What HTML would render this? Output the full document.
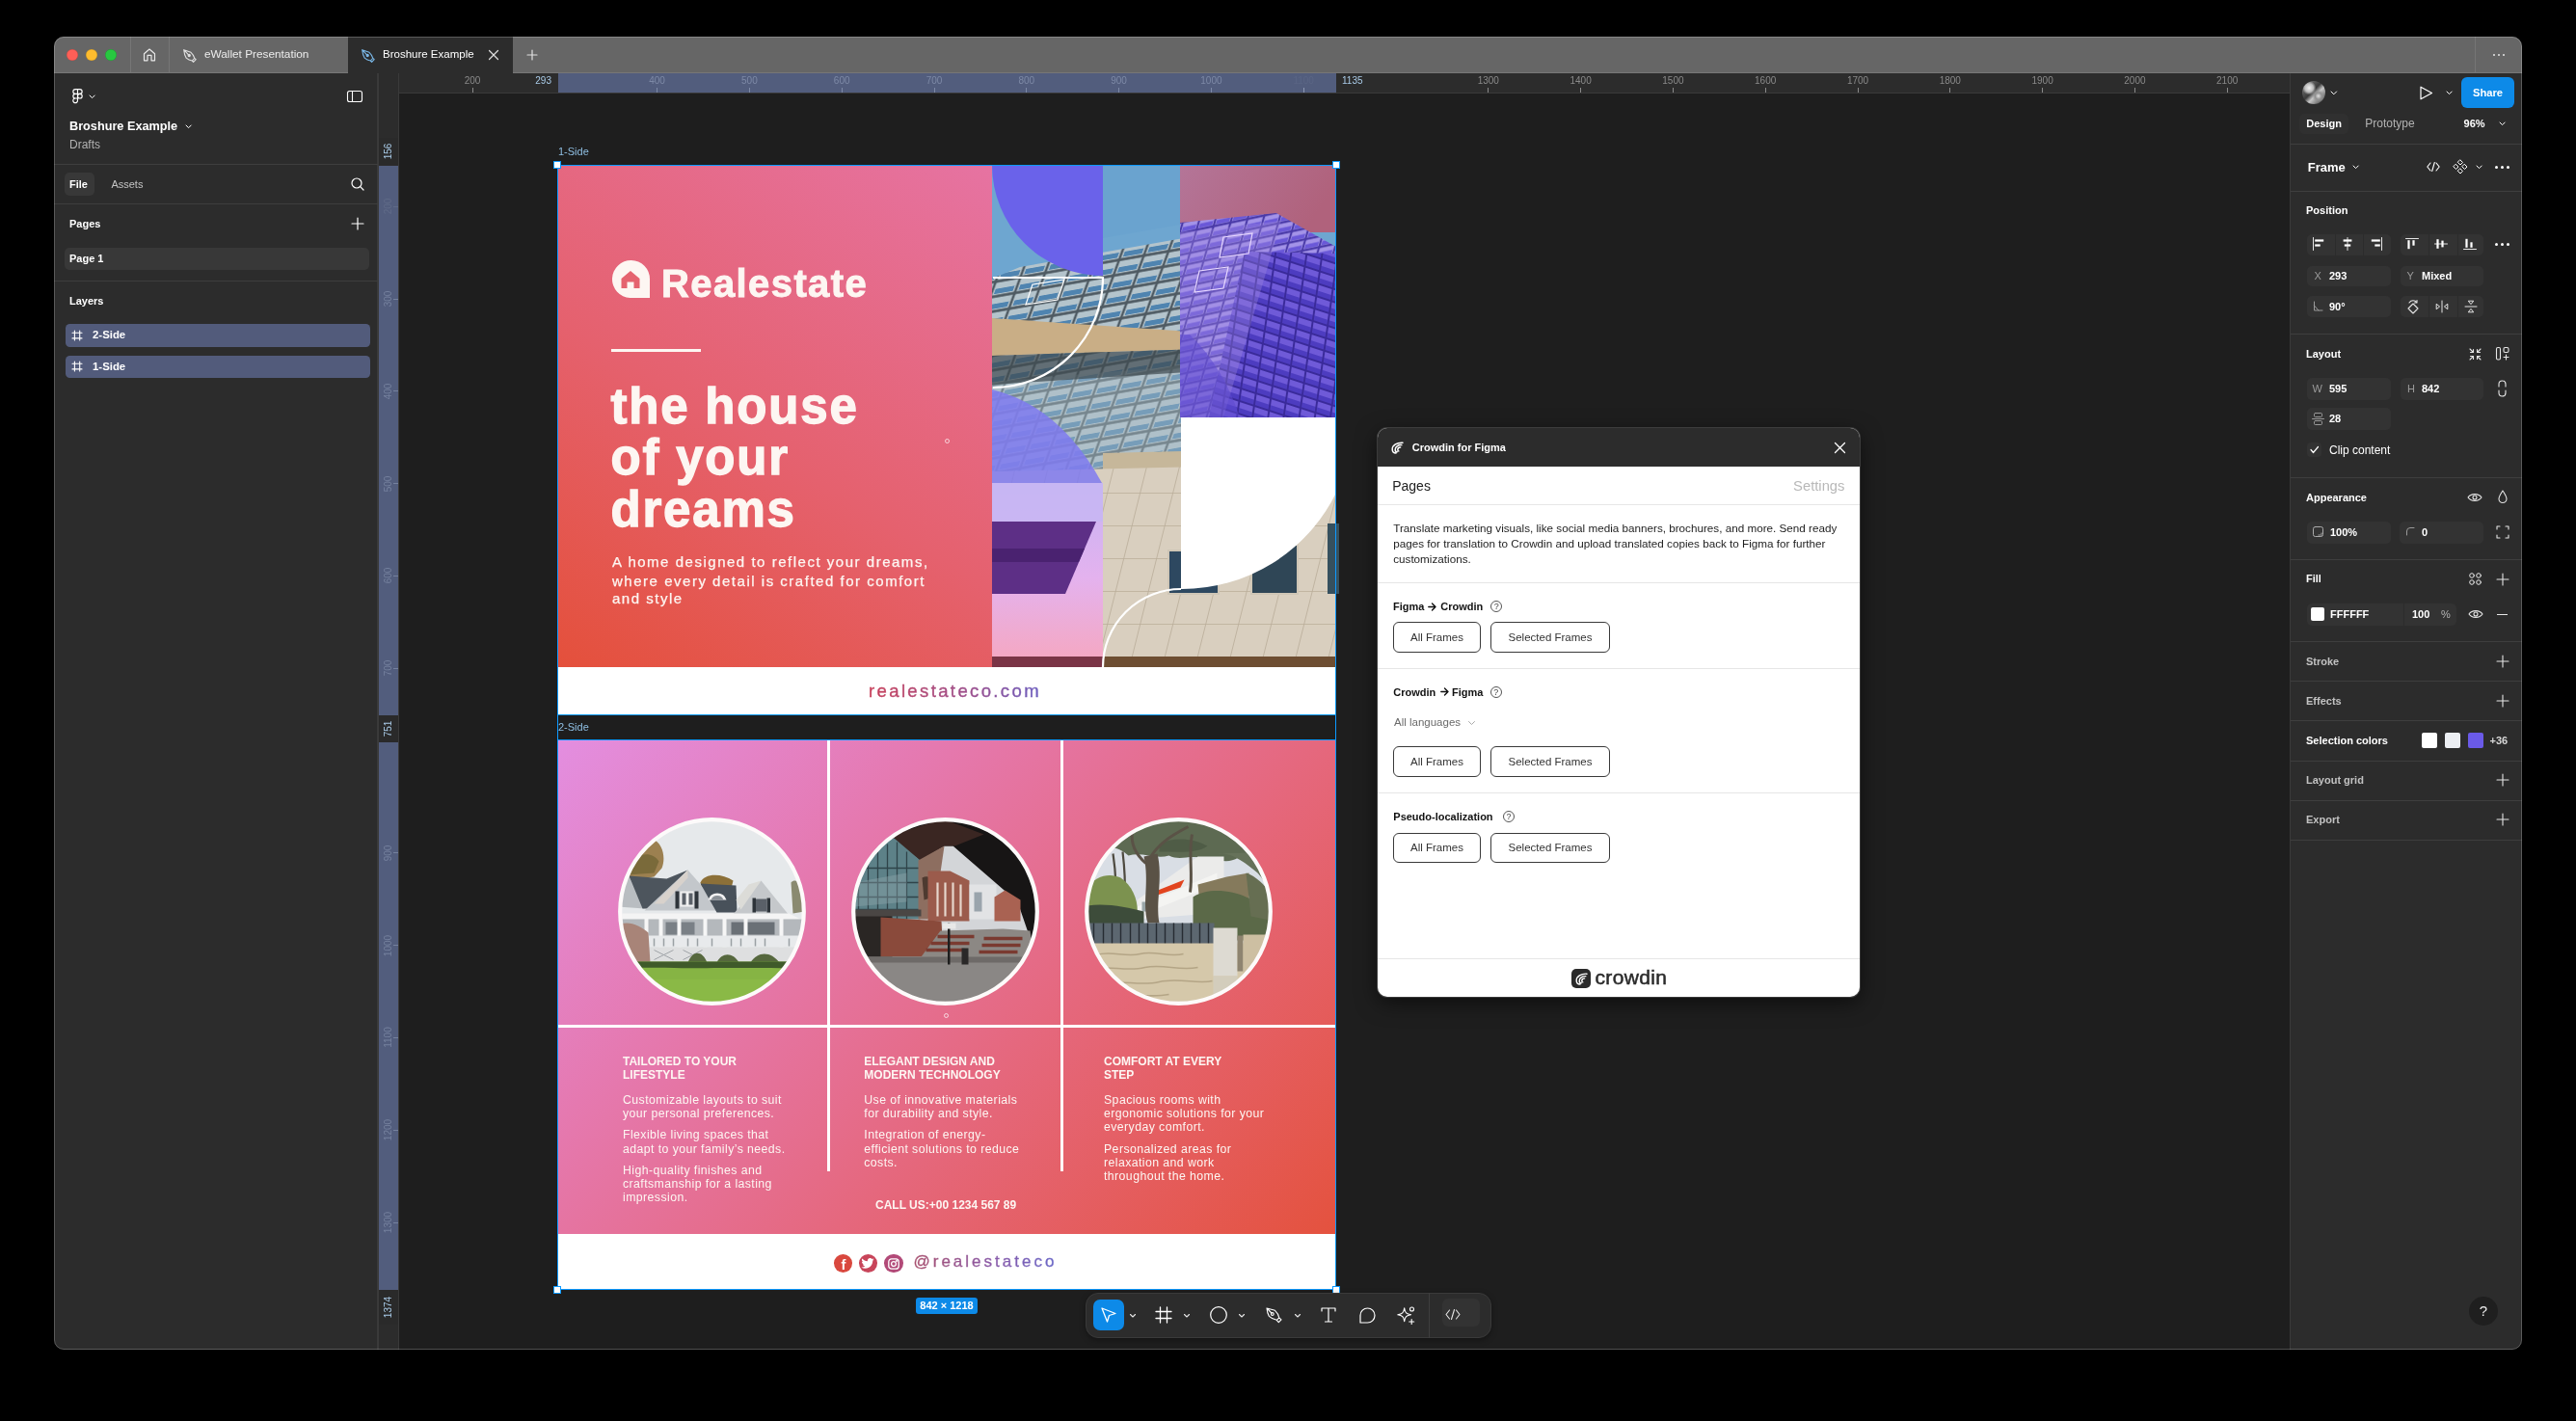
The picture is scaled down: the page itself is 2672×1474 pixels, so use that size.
<!DOCTYPE html>
<html><head><meta charset="utf-8">
<style>
*{box-sizing:border-box;margin:0;padding:0}
html,body{width:2672px;height:1474px;overflow:hidden;background:#000}
body{font-family:"Liberation Sans",sans-serif;position:relative}
.a{position:absolute}
#win{position:absolute;left:0;top:0;width:2672px;height:1474px;clip-path:inset(38px 56px 74px 56px round 10px);background:#1e1e1e;will-change:transform}
.t{position:absolute;white-space:nowrap;line-height:1}
svg{position:absolute;overflow:visible}
</style></head><body>
<div id="win">
<div class="a" style="left:56px;top:38px;width:2560px;height:38px;background:#666666;"></div>
<div class="a" style="left:56px;top:75px;width:2560px;height:1px;background:#777777;"></div>
<div class="a" style="left:361px;top:38px;width:171px;height:38px;background:#2c2c2c;"></div>
<div class="a" style="left:134.5px;top:38px;width:1px;height:37px;background:#767676;"></div>
<div class="a" style="left:175px;top:38px;width:1px;height:37px;background:#767676;"></div>
<div class="a" style="left:2567px;top:38px;width:1px;height:37px;background:#767676;"></div>
<div class="a" style="left:68.7px;top:50.7px;width:12.6px;height:12.6px;background:#fe5f57;border-radius:7px;box-shadow:inset 0 0 0 0.5px rgba(0,0,0,.2)"></div>
<div class="a" style="left:88.7px;top:50.7px;width:12.6px;height:12.6px;background:#febc2e;border-radius:7px;box-shadow:inset 0 0 0 0.5px rgba(0,0,0,.2)"></div>
<div class="a" style="left:108.7px;top:50.7px;width:12.6px;height:12.6px;background:#28c840;border-radius:7px;box-shadow:inset 0 0 0 0.5px rgba(0,0,0,.2)"></div>
<svg style="left:148px;top:49.5px;" width="14" height="14" viewBox="0 0 14 14" fill="none" stroke="#e8e8e8" stroke-width="1.2" stroke-linecap="round" stroke-linejoin="round"><path d="M1.5 12.8 V5.8 L7 1 L12.5 5.8 V12.8 H9 V7.3 H5 V12.8 Z"/></svg>
<svg style="left:189.5px;top:50.5px;" width="14" height="14" viewBox="0 0 14 14" fill="none" stroke="#e0e0e0" stroke-width="1.1" stroke-linecap="round" stroke-linejoin="round"><path d="M0.7 0.7 L8 3.3 Q10.8 5.8 11.8 9.3 L9.3 12 Q5.8 11.5 3.2 9.2 Q1.2 6 0.7 0.7 Z M9.3 12 L10.6 13.3 L13.2 10.7 L11.8 9.3 M0.7 0.7 L5.3 5.6"/><circle cx="6.2" cy="6.5" r="1.1" fill="#e0e0e0"/></svg>
<svg style="left:374.5px;top:50.5px;" width="14" height="14" viewBox="0 0 14 14" fill="none" stroke="#7ab8e8" stroke-width="1.1" stroke-linecap="round" stroke-linejoin="round"><path d="M0.7 0.7 L8 3.3 Q10.8 5.8 11.8 9.3 L9.3 12 Q5.8 11.5 3.2 9.2 Q1.2 6 0.7 0.7 Z M9.3 12 L10.6 13.3 L13.2 10.7 L11.8 9.3 M0.7 0.7 L5.3 5.6"/><circle cx="6.2" cy="6.5" r="1.1" fill="#7ab8e8"/></svg>
<div class="t" style="left:212px;top:51.31px;font-size:11.8px;color:#ececec;">eWallet Presentation</div>
<div class="t" style="left:397px;top:51.46px;font-size:11.5px;color:#fff;">Broshure Example</div>
<svg style="left:507px;top:52px;" width="10" height="10" viewBox="0 0 10 10" fill="none" stroke="#e0e0e0" stroke-width="1.2" stroke-linecap="round" stroke-linejoin="round"><path d="M0.5 0.5 L9.5 9.5 M9.5 0.5 L0.5 9.5"/></svg>
<svg style="left:547px;top:52px;" width="10" height="10" viewBox="0 0 10 10" fill="none" stroke="#e0e0e0" stroke-width="1.2" stroke-linecap="round" stroke-linejoin="round"><path d="M5 0 V10 M0 5 H10"/></svg>
<div class="a" style="left:2585.8px;top:55.8px;width:2.4px;height:2.4px;background:#e8e8e8;border-radius:2px;"></div>
<div class="a" style="left:2590.8px;top:55.8px;width:2.4px;height:2.4px;background:#e8e8e8;border-radius:2px;"></div>
<div class="a" style="left:2595.8px;top:55.8px;width:2.4px;height:2.4px;background:#e8e8e8;border-radius:2px;"></div>
<div class="a" style="left:56px;top:76px;width:336px;height:1324px;background:#2c2c2c;"></div>
<div class="a" style="left:391px;top:76px;width:1px;height:1324px;background:#3a3a3a;"></div>
<svg style="left:75px;top:92px;" width="11" height="16" viewBox="0 0 11 16" fill="none" stroke="#fff" stroke-width="1.15" stroke-linecap="round" stroke-linejoin="round"><path d="M5.5 0.6 H3.2 A2.35 2.35 0 0 0 3.2 5.3 H5.5 Z M5.5 0.6 H7.8 A2.35 2.35 0 0 1 7.8 5.3 H5.5 Z M5.5 5.3 H3.2 A2.35 2.35 0 0 0 3.2 10 H5.5 Z M5.5 10 H3.2 A2.35 2.35 0 1 0 5.5 12.35 Z"/><circle cx="7.85" cy="7.65" r="2.35"/></svg>
<svg style="left:92.4px;top:97.7px;" width="7.2" height="4.6" viewBox="0 0 7.2 4.6" fill="none" stroke="#fff" stroke-width="1" stroke-linecap="round" stroke-linejoin="round"><path d="M1 1 L3.6 3.6 L6.2 1"/></svg>
<svg style="left:360px;top:94px;" width="16" height="12" viewBox="0 0 16 12" fill="none" stroke="#fff" stroke-width="1.1" stroke-linecap="round" stroke-linejoin="round"><rect x="0.5" y="0.5" width="15" height="11" rx="2"/><path d="M5.5 0.5 V11.5"/></svg>
<div class="t" style="left:72px;top:124.88px;font-size:12.7px;color:#fff;font-weight:bold;">Broshure Example</div>
<svg style="left:192.4px;top:128.7px;" width="7.2" height="4.6" viewBox="0 0 7.2 4.6" fill="none" stroke="#fff" stroke-width="1" stroke-linecap="round" stroke-linejoin="round"><path d="M1 1 L3.6 3.6 L6.2 1"/></svg>
<div class="t" style="left:72px;top:144.42px;font-size:12px;color:#b3b3b3;">Drafts</div>
<div class="a" style="left:56px;top:170px;width:336px;height:1px;background:#3e3e3e;"></div>
<div class="a" style="left:66.5px;top:178.6px;width:31.5px;height:24.4px;background:#383838;border-radius:5px;"></div>
<div class="t" style="left:72px;top:185.7px;font-size:11px;color:#fff;font-weight:bold;">File</div>
<div class="t" style="left:115.4px;top:185.7px;font-size:11px;color:#c4c4c4;">Assets</div>
<svg style="left:364px;top:184px;" width="14" height="14" viewBox="0 0 14 14" fill="none" stroke="#fff" stroke-width="1.2" stroke-linecap="round" stroke-linejoin="round"><circle cx="6" cy="6" r="5"/><path d="M9.7 9.7 L13 13"/></svg>
<div class="a" style="left:56px;top:211px;width:336px;height:1px;background:#3e3e3e;"></div>
<div class="t" style="left:72px;top:227px;font-size:11px;color:#fff;font-weight:bold;">Pages</div>
<svg style="left:365px;top:226px;" width="12" height="12" viewBox="0 0 12 12" fill="none" stroke="#fff" stroke-width="1.2" stroke-linecap="round" stroke-linejoin="round"><path d="M6 0 V12 M0 6 H12"/></svg>
<div class="a" style="left:66.5px;top:257px;width:316px;height:23px;background:#383838;border-radius:5px;"></div>
<div class="t" style="left:72px;top:263.2px;font-size:11px;color:#fff;font-weight:bold;">Page 1</div>
<div class="a" style="left:56px;top:291px;width:336px;height:1px;background:#3e3e3e;"></div>
<div class="t" style="left:72px;top:306.7px;font-size:11px;color:#fff;font-weight:bold;">Layers</div>
<div class="a" style="left:68px;top:336.1px;width:316px;height:23.5px;background:#525b7b;border-radius:4.5px;"></div>
<svg style="left:75px;top:343px;" width="10" height="10" viewBox="0 0 10 10" fill="none" stroke="#fff" stroke-width="1.1" stroke-linecap="round" stroke-linejoin="round"><path d="M2.4 0 V10 M7.7 0 V10 M0 2.3 H10 M0 7.9 H10"/></svg>
<div class="t" style="left:96px;top:342.41px;font-size:11.4px;color:#fff;font-weight:bold;">2-Side</div>
<div class="a" style="left:68px;top:368.5px;width:316px;height:23.5px;background:#525b7b;border-radius:4.5px;"></div>
<svg style="left:75px;top:375.4px;" width="10" height="10" viewBox="0 0 10 10" fill="none" stroke="#fff" stroke-width="1.1" stroke-linecap="round" stroke-linejoin="round"><path d="M2.4 0 V10 M7.7 0 V10 M0 2.3 H10 M0 7.9 H10"/></svg>
<div class="t" style="left:96px;top:374.81px;font-size:11.4px;color:#fff;font-weight:bold;">1-Side</div>
<div class="a" style="left:392px;top:76px;width:1984px;height:21px;background:#2c2c2c;"></div>
<div class="a" style="left:392px;top:96px;width:1984px;height:1px;background:#3a3a3a;"></div>
<div class="a" style="left:392px;top:76px;width:22px;height:1324px;background:#2c2c2c;"></div>
<div class="a" style="left:413px;top:76px;width:1px;height:1324px;background:#3a3a3a;"></div>
<div class="a" style="left:392px;top:76px;width:1px;height:1324px;background:#3a3a3a;"></div>
<div class="a" style="left:579px;top:76px;width:807px;height:20px;background:#525d7d;"></div>
<div class="t" style="left:490px;top:78.68px;font-size:10px;color:#8a8a8a;transform:translateX(-50%);">200</div>
<div class="a" style="left:489.5px;top:91px;width:1px;height:5px;background:#8a8a8a;"></div>
<div class="t" style="left:681.6px;top:78.68px;font-size:10px;color:#7d89a6;transform:translateX(-50%);">400</div>
<div class="a" style="left:681.1px;top:91px;width:1px;height:5px;background:#7d89a6;"></div>
<div class="t" style="left:777.4px;top:78.68px;font-size:10px;color:#7d89a6;transform:translateX(-50%);">500</div>
<div class="a" style="left:776.9px;top:91px;width:1px;height:5px;background:#7d89a6;"></div>
<div class="t" style="left:873.2px;top:78.68px;font-size:10px;color:#7d89a6;transform:translateX(-50%);">600</div>
<div class="a" style="left:872.7px;top:91px;width:1px;height:5px;background:#7d89a6;"></div>
<div class="t" style="left:969px;top:78.68px;font-size:10px;color:#7d89a6;transform:translateX(-50%);">700</div>
<div class="a" style="left:968.5px;top:91px;width:1px;height:5px;background:#7d89a6;"></div>
<div class="t" style="left:1064.8px;top:78.68px;font-size:10px;color:#7d89a6;transform:translateX(-50%);">800</div>
<div class="a" style="left:1064.3px;top:91px;width:1px;height:5px;background:#7d89a6;"></div>
<div class="t" style="left:1160.6px;top:78.68px;font-size:10px;color:#7d89a6;transform:translateX(-50%);">900</div>
<div class="a" style="left:1160.1px;top:91px;width:1px;height:5px;background:#7d89a6;"></div>
<div class="t" style="left:1256.4px;top:78.68px;font-size:10px;color:#7d89a6;transform:translateX(-50%);">1000</div>
<div class="a" style="left:1255.9px;top:91px;width:1px;height:5px;background:#7d89a6;"></div>
<div class="t" style="left:1543.8px;top:78.68px;font-size:10px;color:#8a8a8a;transform:translateX(-50%);">1300</div>
<div class="a" style="left:1543.3px;top:91px;width:1px;height:5px;background:#8a8a8a;"></div>
<div class="t" style="left:1639.6px;top:78.68px;font-size:10px;color:#8a8a8a;transform:translateX(-50%);">1400</div>
<div class="a" style="left:1639.1px;top:91px;width:1px;height:5px;background:#8a8a8a;"></div>
<div class="t" style="left:1735.4px;top:78.68px;font-size:10px;color:#8a8a8a;transform:translateX(-50%);">1500</div>
<div class="a" style="left:1734.9px;top:91px;width:1px;height:5px;background:#8a8a8a;"></div>
<div class="t" style="left:1831.2px;top:78.68px;font-size:10px;color:#8a8a8a;transform:translateX(-50%);">1600</div>
<div class="a" style="left:1830.7px;top:91px;width:1px;height:5px;background:#8a8a8a;"></div>
<div class="t" style="left:1927px;top:78.68px;font-size:10px;color:#8a8a8a;transform:translateX(-50%);">1700</div>
<div class="a" style="left:1926.5px;top:91px;width:1px;height:5px;background:#8a8a8a;"></div>
<div class="t" style="left:2022.8px;top:78.68px;font-size:10px;color:#8a8a8a;transform:translateX(-50%);">1800</div>
<div class="a" style="left:2022.3px;top:91px;width:1px;height:5px;background:#8a8a8a;"></div>
<div class="t" style="left:2118.6px;top:78.68px;font-size:10px;color:#8a8a8a;transform:translateX(-50%);">1900</div>
<div class="a" style="left:2118.1px;top:91px;width:1px;height:5px;background:#8a8a8a;"></div>
<div class="t" style="left:2214.4px;top:78.68px;font-size:10px;color:#8a8a8a;transform:translateX(-50%);">2000</div>
<div class="a" style="left:2213.9px;top:91px;width:1px;height:5px;background:#8a8a8a;"></div>
<div class="t" style="left:2310.2px;top:78.68px;font-size:10px;color:#8a8a8a;transform:translateX(-50%);">2100</div>
<div class="a" style="left:2309.7px;top:91px;width:1px;height:5px;background:#8a8a8a;"></div>
<div class="a" style="left:1351.7px;top:91px;width:1px;height:5px;background:#8d98b3;"></div>
<div class="t" style="left:1352.2px;top:78.68px;font-size:10px;color:#5a6584;transform:translateX(-50%);">1100</div>
<div class="t" style="right:2100px;top:78.68px;font-size:10px;color:#a9cbe8;">293</div>
<div class="t" style="left:1392px;top:78.68px;font-size:10px;color:#a9cbe8;">1135</div>
<div class="a" style="left:393px;top:172px;width:20px;height:570px;background:#525d7d;"></div>
<div class="a" style="left:393px;top:769px;width:20px;height:570px;background:#525d7d;"></div>
<div class="t" style="left:402.5px;top:214.2px;font-size:10px;color:#606b88;transform:translate(-50%,-50%) rotate(-90deg)">200</div>
<div class="a" style="left:408px;top:213.7px;width:5px;height:1px;background:#606b88;"></div>
<div class="t" style="left:402.5px;top:310px;font-size:10px;color:#75819e;transform:translate(-50%,-50%) rotate(-90deg)">300</div>
<div class="a" style="left:408px;top:309.5px;width:5px;height:1px;background:#75819e;"></div>
<div class="t" style="left:402.5px;top:405.8px;font-size:10px;color:#75819e;transform:translate(-50%,-50%) rotate(-90deg)">400</div>
<div class="a" style="left:408px;top:405.3px;width:5px;height:1px;background:#75819e;"></div>
<div class="t" style="left:402.5px;top:501.6px;font-size:10px;color:#75819e;transform:translate(-50%,-50%) rotate(-90deg)">500</div>
<div class="a" style="left:408px;top:501.1px;width:5px;height:1px;background:#75819e;"></div>
<div class="t" style="left:402.5px;top:597.4px;font-size:10px;color:#75819e;transform:translate(-50%,-50%) rotate(-90deg)">600</div>
<div class="a" style="left:408px;top:596.9px;width:5px;height:1px;background:#75819e;"></div>
<div class="t" style="left:402.5px;top:693.2px;font-size:10px;color:#75819e;transform:translate(-50%,-50%) rotate(-90deg)">700</div>
<div class="a" style="left:408px;top:692.7px;width:5px;height:1px;background:#75819e;"></div>
<div class="t" style="left:402.5px;top:884.8px;font-size:10px;color:#75819e;transform:translate(-50%,-50%) rotate(-90deg)">900</div>
<div class="a" style="left:408px;top:884.3px;width:5px;height:1px;background:#75819e;"></div>
<div class="t" style="left:402.5px;top:980.6px;font-size:10px;color:#75819e;transform:translate(-50%,-50%) rotate(-90deg)">1000</div>
<div class="a" style="left:408px;top:980.1px;width:5px;height:1px;background:#75819e;"></div>
<div class="t" style="left:402.5px;top:1076.4px;font-size:10px;color:#75819e;transform:translate(-50%,-50%) rotate(-90deg)">1100</div>
<div class="a" style="left:408px;top:1075.9px;width:5px;height:1px;background:#75819e;"></div>
<div class="t" style="left:402.5px;top:1172.2px;font-size:10px;color:#75819e;transform:translate(-50%,-50%) rotate(-90deg)">1200</div>
<div class="a" style="left:408px;top:1171.7px;width:5px;height:1px;background:#75819e;"></div>
<div class="t" style="left:402.5px;top:1268px;font-size:10px;color:#75819e;transform:translate(-50%,-50%) rotate(-90deg)">1300</div>
<div class="a" style="left:408px;top:1267.5px;width:5px;height:1px;background:#75819e;"></div>
<div class="a" style="left:393px;top:142.5px;width:20px;height:28px;background:#2a2a2a;"></div>
<div class="t" style="left:402.5px;top:156.5px;font-size:10px;color:#a9cbe8;transform:translate(-50%,-50%) rotate(-90deg)">156</div>
<div class="a" style="left:393px;top:741.5px;width:20px;height:28px;background:#2a2a2a;"></div>
<div class="t" style="left:402.5px;top:755.5px;font-size:10px;color:#a9cbe8;transform:translate(-50%,-50%) rotate(-90deg)">751</div>
<div class="a" style="left:393px;top:1338px;width:20px;height:36px;background:#2a2a2a;"></div>
<div class="t" style="left:402.5px;top:1356px;font-size:10px;color:#a9cbe8;transform:translate(-50%,-50%) rotate(-90deg)">1374</div>
<div class="a" style="left:2375px;top:76px;width:241px;height:1324px;background:#2c2c2c;"></div>
<div class="a" style="left:2375px;top:76px;width:1px;height:1324px;background:#3a3a3a;"></div>
<div class="a" style="left:2388px;top:84px;width:24px;height:24px;border-radius:50%;background:radial-gradient(circle at 30% 30%,#f0f0f0 0,#bdbdbd 18%,transparent 30%),radial-gradient(circle at 70% 65%,#e0e0e0 0,#909090 15%,transparent 28%),linear-gradient(135deg,#8a8a8a,#3a3a3a 45%,#c8c8c8 60%,#2a2a2a)"></div>
<svg style="left:2417.2px;top:93.6px;" width="7.6" height="4.8" viewBox="0 0 7.6 4.8" fill="none" stroke="#fff" stroke-width="1" stroke-linecap="round" stroke-linejoin="round"><path d="M1 1 L3.8 3.8 L6.6 1"/></svg>
<svg style="left:2510px;top:89px;" width="14" height="15" viewBox="0 0 14 15" fill="none" stroke="#fff" stroke-width="1.2" stroke-linecap="round" stroke-linejoin="round"><path d="M1 1.2 L12.5 7.5 L1 13.8 Z"/></svg>
<svg style="left:2537.4px;top:93.7px;" width="7.2" height="4.6" viewBox="0 0 7.2 4.6" fill="none" stroke="#fff" stroke-width="1" stroke-linecap="round" stroke-linejoin="round"><path d="M1 1 L3.6 3.6 L6.2 1"/></svg>
<div class="a" style="left:2553px;top:80.2px;width:55px;height:31.7px;background:#0d8ae8;border-radius:6px;"></div>
<div class="t" style="left:2580.5px;top:90.6px;font-size:11.2px;color:#fff;transform:translateX(-50%);font-weight:bold;">Share</div>
<div class="a" style="left:2385.3px;top:118px;width:50.7px;height:21.4px;background:#303030;border-radius:5px;"></div>
<div class="t" style="left:2392.3px;top:122.9px;font-size:11px;color:#fff;font-weight:bold;">Design</div>
<div class="t" style="left:2453.3px;top:122.42px;font-size:12px;color:#b3b3b3;">Prototype</div>
<div class="t" style="left:2555.6px;top:122.9px;font-size:11px;color:#fff;font-weight:bold;">96%</div>
<svg style="left:2592.4px;top:125.7px;" width="7.2" height="4.6" viewBox="0 0 7.2 4.6" fill="none" stroke="#fff" stroke-width="1" stroke-linecap="round" stroke-linejoin="round"><path d="M1 1 L3.6 3.6 L6.2 1"/></svg>
<div class="a" style="left:2376px;top:149px;width:240px;height:1px;background:#3e3e3e;"></div>
<div class="t" style="left:2393.7px;top:166.93px;font-size:13px;color:#fff;font-weight:bold;">Frame</div>
<svg style="left:2439.9px;top:171.1px;" width="7.2" height="4.6" viewBox="0 0 7.2 4.6" fill="none" stroke="#fff" stroke-width="1" stroke-linecap="round" stroke-linejoin="round"><path d="M1 1 L3.6 3.6 L6.2 1"/></svg>
<svg style="left:2517px;top:168px;" width="14" height="10" viewBox="0 0 14 10" fill="none" stroke="#fff" stroke-width="1.1" stroke-linecap="round" stroke-linejoin="round"><path d="M4 1 L0.8 5 L4 9 M10 1 L13.2 5 L10 9 M8.3 0.5 L5.7 9.5"/></svg>
<svg style="left:2545px;top:165px;" width="14" height="16" viewBox="0 0 14 16" fill="none" stroke="#fff" stroke-width="1" stroke-linecap="round" stroke-linejoin="round"><path d="M7 1 L9.5 3.5 L7 6 L4.5 3.5 Z M7 10 L9.5 12.5 L7 15 L4.5 12.5 Z M2.5 5.5 L5 8 L2.5 10.5 L0 8 Z M11.5 5.5 L14 8 L11.5 10.5 L9 8 Z"/></svg>
<svg style="left:2568.4px;top:171.1px;" width="7.2" height="4.6" viewBox="0 0 7.2 4.6" fill="none" stroke="#fff" stroke-width="1" stroke-linecap="round" stroke-linejoin="round"><path d="M1 1 L3.6 3.6 L6.2 1"/></svg>
<div class="a" style="left:2588px;top:172px;width:2.8px;height:2.8px;background:#fff;border-radius:2px;"></div>
<div class="a" style="left:2594px;top:172px;width:2.8px;height:2.8px;background:#fff;border-radius:2px;"></div>
<div class="a" style="left:2600px;top:172px;width:2.8px;height:2.8px;background:#fff;border-radius:2px;"></div>
<div class="a" style="left:2376px;top:197.5px;width:240px;height:1px;background:#3e3e3e;"></div>
<div class="t" style="left:2392px;top:212.7px;font-size:11px;color:#fff;font-weight:bold;">Position</div>
<div class="a" style="left:2392.8px;top:242.8px;width:87.2px;height:22.2px;background:#333333;border-radius:5px;"></div>
<div class="a" style="left:2490px;top:242.8px;width:85.8px;height:22.2px;background:#333333;border-radius:5px;"></div>
<div class="a" style="left:2421.5px;top:243px;width:1px;height:22px;background:#2c2c2c;"></div>
<div class="a" style="left:2451px;top:243px;width:1px;height:22px;background:#2c2c2c;"></div>
<div class="a" style="left:2519px;top:243px;width:1px;height:22px;background:#2c2c2c;"></div>
<div class="a" style="left:2548.5px;top:243px;width:1px;height:22px;background:#2c2c2c;"></div>
<svg style="left:2398px;top:246px;" width="14" height="14" viewBox="0 0 14 14" fill="none" stroke="#e6e6e6" stroke-width="1" stroke-linecap="round" stroke-linejoin="round"><path d="M1.5 0.5 V13.5"/><rect x="3.2" y="2.4" width="9" height="2.2" fill="#fff" stroke="none"/><rect x="3.2" y="7.4" width="5.5" height="2.2" fill="#fff" stroke="none"/></svg>
<svg style="left:2428px;top:246px;" width="14" height="14" viewBox="0 0 14 14" fill="none" stroke="#e6e6e6" stroke-width="1" stroke-linecap="round" stroke-linejoin="round"><path d="M7 0.5 V13.5"/><rect x="2.6" y="2.4" width="8.8" height="2.2" fill="#fff" stroke="none"/><rect x="3.8" y="7.4" width="6.4" height="2.2" fill="#fff" stroke="none"/></svg>
<svg style="left:2458px;top:246px;" width="14" height="14" viewBox="0 0 14 14" fill="none" stroke="#e6e6e6" stroke-width="1" stroke-linecap="round" stroke-linejoin="round"><path d="M12.5 0.5 V13.5"/><rect x="1.8" y="2.4" width="9" height="2.2" fill="#fff" stroke="none"/><rect x="5.3" y="7.4" width="5.5" height="2.2" fill="#fff" stroke="none"/></svg>
<svg style="left:2495px;top:246px;" width="14" height="14" viewBox="0 0 14 14" fill="none" stroke="#e6e6e6" stroke-width="1" stroke-linecap="round" stroke-linejoin="round"><path d="M0.5 1.5 H13.5"/><rect x="2.4" y="3.2" width="2.2" height="9" fill="#fff" stroke="none"/><rect x="7.4" y="3.2" width="2.2" height="5.5" fill="#fff" stroke="none"/></svg>
<svg style="left:2525px;top:246px;" width="14" height="14" viewBox="0 0 14 14" fill="none" stroke="#e6e6e6" stroke-width="1" stroke-linecap="round" stroke-linejoin="round"><path d="M0.5 7 H13.5"/><rect x="2.4" y="2.2" width="2.2" height="9.6" fill="#fff" stroke="none"/><rect x="7.4" y="3.6" width="2.2" height="6.8" fill="#fff" stroke="none"/></svg>
<svg style="left:2555px;top:246px;" width="14" height="14" viewBox="0 0 14 14" fill="none" stroke="#e6e6e6" stroke-width="1" stroke-linecap="round" stroke-linejoin="round"><path d="M0.5 12.5 H13.5"/><rect x="2.4" y="1.8" width="2.2" height="9" fill="#fff" stroke="none"/><rect x="7.4" y="5.3" width="2.2" height="5.5" fill="#fff" stroke="none"/></svg>
<div class="a" style="left:2588.1px;top:252.1px;width:2.8px;height:2.8px;background:#fff;border-radius:2px;"></div>
<div class="a" style="left:2594.1px;top:252.1px;width:2.8px;height:2.8px;background:#fff;border-radius:2px;"></div>
<div class="a" style="left:2600.1px;top:252.1px;width:2.8px;height:2.8px;background:#fff;border-radius:2px;"></div>
<div class="a" style="left:2392.8px;top:275.5px;width:87.2px;height:21.5px;background:#333333;border-radius:5px;"></div>
<div class="a" style="left:2490px;top:275.5px;width:85.8px;height:21.5px;background:#333333;border-radius:5px;"></div>
<div class="t" style="left:2400.5px;top:281px;font-size:11px;color:#9a9a9a;">X</div>
<div class="t" style="left:2416px;top:281px;font-size:11px;color:#fff;font-weight:bold;">293</div>
<div class="t" style="left:2496.5px;top:281px;font-size:11px;color:#9a9a9a;">Y</div>
<div class="t" style="left:2512px;top:281px;font-size:11px;color:#fff;font-weight:bold;">Mixed</div>
<div class="a" style="left:2392.8px;top:307px;width:87.2px;height:22px;background:#333333;border-radius:5px;"></div>
<div class="a" style="left:2490px;top:307px;width:85.8px;height:22px;background:#333333;border-radius:5px;"></div>
<div class="a" style="left:2519px;top:307px;width:1px;height:22px;background:#2c2c2c;"></div>
<div class="a" style="left:2548.5px;top:307px;width:1px;height:22px;background:#2c2c2c;"></div>
<svg style="left:2399px;top:312px;" width="11" height="11" viewBox="0 0 11 11" fill="none" stroke="#9a9a9a" stroke-width="1" stroke-linecap="round" stroke-linejoin="round"><path d="M1.5 1 V10 H10 M1.5 5 L6 10"/></svg>
<div class="t" style="left:2416px;top:312.7px;font-size:11px;color:#fff;font-weight:bold;">90°</div>
<svg style="left:2496px;top:310px;" width="14" height="16" viewBox="0 0 14 16" fill="none" stroke="#e6e6e6" stroke-width="1.1" stroke-linecap="round" stroke-linejoin="round"><path d="M7 5 L12 10 L7 15 L2 10 Z M3 4 C5 1 9 1 11 4 M11 1.5 V4 H8.5"/></svg>
<svg style="left:2526px;top:311px;" width="14" height="14" viewBox="0 0 14 14" fill="none" stroke="#e6e6e6" stroke-width="1" stroke-linecap="round" stroke-linejoin="round"><path d="M7 1 V13 M1.5 4.5 L4.6 7 L1.5 9.5 Z M12.5 4.5 L9.4 7 L12.5 9.5 Z"/></svg>
<svg style="left:2556px;top:311px;" width="14" height="14" viewBox="0 0 14 14" fill="none" stroke="#e6e6e6" stroke-width="1" stroke-linecap="round" stroke-linejoin="round"><path d="M1 7 H13 M4.5 1.5 L7 4.6 L9.5 1.5 Z M4.5 12.5 L7 9.4 L9.5 12.5 Z"/></svg>
<div class="a" style="left:2376px;top:346px;width:240px;height:1px;background:#3e3e3e;"></div>
<div class="t" style="left:2392px;top:362px;font-size:11px;color:#fff;font-weight:bold;">Layout</div>
<svg style="left:2561px;top:361px;" width="13" height="13" viewBox="0 0 13 13" fill="none" stroke="#e6e6e6" stroke-width="1.1" stroke-linecap="round" stroke-linejoin="round"><path d="M1 1 L4.5 4.5 M4.5 1.5 V4.5 H1.5 M12 1 L8.5 4.5 M8.5 1.5 V4.5 H11.5 M1 12 L4.5 8.5 M1.5 8.5 H4.5 V11.5 M12 12 L8.5 8.5 M11.5 8.5 H8.5 V11.5"/></svg>
<svg style="left:2589px;top:360px;" width="14" height="14" viewBox="0 0 14 14" fill="none" stroke="#e6e6e6" stroke-width="1.1" stroke-linecap="round" stroke-linejoin="round"><rect x="0.5" y="0.5" width="4" height="12.5" rx="1.5"/><rect x="8" y="0.5" width="5" height="5" rx="1.5"/><path d="M10.5 8 V13 M8 10.5 H13"/></svg>
<div class="a" style="left:2392.8px;top:391.6px;width:87.2px;height:23.2px;background:#333333;border-radius:5px;"></div>
<div class="a" style="left:2490px;top:391.6px;width:85.8px;height:23.2px;background:#333333;border-radius:5px;"></div>
<div class="t" style="left:2398.5px;top:397.9px;font-size:11px;color:#9a9a9a;">W</div>
<div class="t" style="left:2416px;top:397.9px;font-size:11px;color:#fff;font-weight:bold;">595</div>
<div class="t" style="left:2497px;top:397.9px;font-size:11px;color:#9a9a9a;">H</div>
<div class="t" style="left:2512px;top:397.9px;font-size:11px;color:#fff;font-weight:bold;">842</div>
<svg style="left:2591px;top:395px;" width="9" height="16" viewBox="0 0 9 16" fill="none" stroke="#e6e6e6" stroke-width="1.1" stroke-linecap="round" stroke-linejoin="round"><path d="M1 6 V3.5 A3.5 3.5 0 0 1 8 3.5 V6 M1 10 V12.5 A3.5 3.5 0 0 0 8 12.5 V10"/></svg>
<div class="a" style="left:2392.8px;top:423px;width:87.2px;height:23px;background:#333333;border-radius:5px;"></div>
<svg style="left:2398px;top:428px;" width="13" height="13" viewBox="0 0 13 13" fill="none" stroke="#9a9a9a" stroke-width="1" stroke-linecap="round" stroke-linejoin="round"><rect x="2.5" y="0.5" width="8" height="4" rx="1"/><rect x="2.5" y="8.5" width="8" height="4" rx="1"/><path d="M0.5 6.5 H12.5"/></svg>
<div class="t" style="left:2416px;top:429.2px;font-size:11px;color:#fff;font-weight:bold;">28</div>
<div class="a" style="left:2393px;top:459px;width:15px;height:15px;background:#333;border-radius:4px;"></div>
<svg style="left:2396px;top:461.5px;" width="9" height="9" viewBox="0 0 9 9" fill="none" stroke="#fff" stroke-width="1.2" stroke-linecap="round" stroke-linejoin="round"><path d="M1 4.5 L3.5 7.5 L8.5 1.5"/></svg>
<div class="t" style="left:2416px;top:461.22px;font-size:12px;color:#fff;">Clip content</div>
<div class="a" style="left:2376px;top:495.2px;width:240px;height:1px;background:#3e3e3e;"></div>
<div class="t" style="left:2392px;top:510.7px;font-size:11px;color:#fff;font-weight:bold;">Appearance</div>
<svg style="left:2559px;top:511px;" width="16" height="10" viewBox="0 0 16 10" fill="none" stroke="#e6e6e6" stroke-width="1.1" stroke-linecap="round" stroke-linejoin="round"><path d="M1 5 C4 0.5 12 0.5 15 5 C12 9.5 4 9.5 1 5 Z"/><circle cx="8" cy="5" r="2"/></svg>
<svg style="left:2591px;top:508px;" width="10" height="15" viewBox="0 0 10 15" fill="none" stroke="#e6e6e6" stroke-width="1.1" stroke-linecap="round" stroke-linejoin="round"><path d="M5 1 C3 4 1 7 1 9.5 A4 4 0 0 0 9 9.5 C9 7 7 4 5 1 Z"/></svg>
<div class="a" style="left:2392.7px;top:540.8px;width:87.3px;height:22.8px;background:#333333;border-radius:5px;"></div>
<div class="a" style="left:2489px;top:540.8px;width:87px;height:22.8px;background:#333333;border-radius:5px;"></div>
<svg style="left:2399px;top:546px;" width="11" height="11" viewBox="0 0 11 11" fill="none" stroke="#aaa" stroke-width="1" stroke-linecap="round" stroke-linejoin="round"><rect x="0.5" y="0.5" width="10" height="10" rx="2"/><path d="M6 9 H9 V6" stroke-dasharray="1 1"/></svg>
<div class="t" style="left:2417px;top:546.9px;font-size:11px;color:#fff;font-weight:bold;">100%</div>
<svg style="left:2496px;top:547px;" width="8" height="8" viewBox="0 0 8 8" fill="none" stroke="#9a9a9a" stroke-width="1" stroke-linecap="round" stroke-linejoin="round"><path d="M0.5 8 V4 A3.5 3.5 0 0 1 4 0.5 H8"/></svg>
<div class="t" style="left:2512px;top:546.9px;font-size:11px;color:#fff;font-weight:bold;">0</div>
<svg style="left:2589px;top:545px;" width="14" height="14" viewBox="0 0 14 14" fill="none" stroke="#e6e6e6" stroke-width="1.1" stroke-linecap="round" stroke-linejoin="round"><path d="M1 4 V1 H4 M10 1 H13 V4 M13 10 V13 H10 M4 13 H1 V10"/></svg>
<div class="a" style="left:2376px;top:580.4px;width:240px;height:1px;background:#3e3e3e;"></div>
<div class="t" style="left:2392px;top:595.2px;font-size:11px;color:#fff;font-weight:bold;">Fill</div>
<svg style="left:2561px;top:594px;" width="13" height="13" viewBox="0 0 13 13" fill="none" stroke="#e6e6e6" stroke-width="1" stroke-linecap="round" stroke-linejoin="round"><circle cx="3" cy="3" r="2.3"/><circle cx="10" cy="3" r="2.3"/><circle cx="3" cy="10" r="2.3"/><circle cx="10" cy="10" r="2.3"/></svg>
<svg style="left:2589.5px;top:594.5px;" width="12" height="12" viewBox="0 0 12 12" fill="none" stroke="#e6e6e6" stroke-width="1.1" stroke-linecap="round" stroke-linejoin="round"><path d="M6 0 V12 M0 6 H12"/></svg>
<div class="a" style="left:2392.7px;top:626px;width:155.3px;height:22.6px;background:#333333;border-radius:5px;"></div>
<div class="a" style="left:2492.5px;top:626px;width:1px;height:22.6px;background:#2c2c2c;"></div>
<div class="a" style="left:2397px;top:630px;width:14.2px;height:14.2px;background:#fff;border-radius:2px;"></div>
<div class="t" style="left:2417px;top:632px;font-size:11px;color:#fff;font-weight:bold;">FFFFFF</div>
<div class="t" style="left:2502px;top:632px;font-size:11px;color:#fff;font-weight:bold;">100</div>
<div class="t" style="left:2532px;top:632px;font-size:11px;color:#b3b3b3;">%</div>
<svg style="left:2560px;top:632px;" width="16" height="10" viewBox="0 0 16 10" fill="none" stroke="#e6e6e6" stroke-width="1.1" stroke-linecap="round" stroke-linejoin="round"><path d="M1 5 C4 0.5 12 0.5 15 5 C12 9.5 4 9.5 1 5 Z"/><circle cx="8" cy="5" r="2"/></svg>
<div class="a" style="left:2590px;top:637px;width:11px;height:1.2px;background:#e6e6e6;"></div>
<div class="a" style="left:2376px;top:665.2px;width:240px;height:1px;background:#3e3e3e;"></div>
<div class="a" style="left:2376px;top:706px;width:240px;height:1px;background:#3e3e3e;"></div>
<div class="a" style="left:2376px;top:747px;width:240px;height:1px;background:#3e3e3e;"></div>
<div class="a" style="left:2376px;top:788.5px;width:240px;height:1px;background:#3e3e3e;"></div>
<div class="a" style="left:2376px;top:829.8px;width:240px;height:1px;background:#3e3e3e;"></div>
<div class="a" style="left:2376px;top:870.5px;width:240px;height:1px;background:#3e3e3e;"></div>
<div class="t" style="left:2392px;top:680.7px;font-size:11px;color:#c2c2c2;font-weight:bold;">Stroke</div>
<svg style="left:2589.5px;top:680px;" width="12" height="12" viewBox="0 0 12 12" fill="none" stroke="#e6e6e6" stroke-width="1.1" stroke-linecap="round" stroke-linejoin="round"><path d="M6 0 V12 M0 6 H12"/></svg>
<div class="t" style="left:2392px;top:721.7px;font-size:11px;color:#c2c2c2;font-weight:bold;">Effects</div>
<svg style="left:2589.5px;top:721px;" width="12" height="12" viewBox="0 0 12 12" fill="none" stroke="#e6e6e6" stroke-width="1.1" stroke-linecap="round" stroke-linejoin="round"><path d="M6 0 V12 M0 6 H12"/></svg>
<div class="t" style="left:2392px;top:803.7px;font-size:11px;color:#c2c2c2;font-weight:bold;">Layout grid</div>
<svg style="left:2589.5px;top:803px;" width="12" height="12" viewBox="0 0 12 12" fill="none" stroke="#e6e6e6" stroke-width="1.1" stroke-linecap="round" stroke-linejoin="round"><path d="M6 0 V12 M0 6 H12"/></svg>
<div class="t" style="left:2392px;top:844.7px;font-size:11px;color:#c2c2c2;font-weight:bold;">Export</div>
<svg style="left:2589.5px;top:844px;" width="12" height="12" viewBox="0 0 12 12" fill="none" stroke="#e6e6e6" stroke-width="1.1" stroke-linecap="round" stroke-linejoin="round"><path d="M6 0 V12 M0 6 H12"/></svg>
<div class="t" style="left:2392px;top:762.7px;font-size:11px;color:#fff;font-weight:bold;">Selection colors</div>
<div class="a" style="left:2511.8px;top:760px;width:16.4px;height:16.4px;background:#fff;border-radius:2px;"></div>
<div class="a" style="left:2535.8px;top:760px;width:16.4px;height:16.4px;background:#eceff3;border-radius:2px;"></div>
<div class="a" style="left:2559.8px;top:760px;width:16.4px;height:16.4px;background:#6a5ae8;border-radius:2px;"></div>
<div class="t" style="left:2582.5px;top:762.7px;font-size:11px;color:#d6d6d6;font-weight:bold;">+36</div>
<div class="a" style="left:2561px;top:1344.5px;width:30px;height:30px;background:#1f1f1f;border-radius:15px;"></div>
<div class="t" style="left:2576px;top:1352.27px;font-size:15px;color:#e8e8e8;transform:translateX(-50%);">?</div>
<div class="a" style="left:578px;top:171px;width:451px;height:521px;background:linear-gradient(32deg,#e4503b 0%,#e5616e 45%,#e673a2 100%)"></div>
<div class="a" style="left:578px;top:691.6px;width:808px;height:49.6px;background:#fff;"></div>
<svg style="left:634px;top:269.5px" width="40" height="39" viewBox="0 0 40 39">
<path d="M40 39 H19.5 A19.5 19.5 0 1 1 40 19.5 Z" fill="#fdf6f2"/>
<path d="M10.5 29 V19 L20 11 L29.5 19 V29 H23.5 V22.5 H16.5 V29 Z" fill="#e5636f"/>
</svg>
<div class="t" style="left:686px;top:273.94px;font-size:40px;color:#fdf6f2;font-weight:bold;letter-spacing:1.4px;-webkit-text-stroke:0.9px #fdf6f2">Realestate</div>
<div class="a" style="left:634px;top:362px;width:93px;height:3.2px;background:#fdf6f2;"></div>
<div class="t" style="left:633.5px;top:396.23px;font-size:51px;color:#fdf6f2;font-weight:bold;letter-spacing:1.8px;-webkit-text-stroke:1.3px #fdf6f2">the house</div>
<div class="t" style="left:633.5px;top:449.13px;font-size:51px;color:#fdf6f2;font-weight:bold;letter-spacing:1.8px;-webkit-text-stroke:1.3px #fdf6f2">of your</div>
<div class="t" style="left:633.5px;top:503.23px;font-size:51px;color:#fdf6f2;font-weight:bold;letter-spacing:1.8px;-webkit-text-stroke:1.3px #fdf6f2">dreams</div>
<div class="t" style="left:635px;top:575.3px;font-size:15px;color:#fdf6f2;letter-spacing:1.52px;-webkit-text-stroke:0.25px #fdf6f2">A home designed to reflect your dreams,</div>
<div class="t" style="left:635px;top:595.2px;font-size:15px;color:#fdf6f2;letter-spacing:1.52px;-webkit-text-stroke:0.25px #fdf6f2">where every detail is crafted for comfort</div>
<div class="t" style="left:635px;top:613.3px;font-size:15px;color:#fdf6f2;letter-spacing:1.52px;-webkit-text-stroke:0.25px #fdf6f2">and style</div>
<div class="t" style="left:901px;top:708.24px;font-size:18.5px;color:transparent;letter-spacing:2.38px;background:linear-gradient(90deg,#c8405a,#9a4f8e 60%,#6c5fc0);-webkit-background-clip:text;background-clip:text;-webkit-text-stroke:0.4px transparent">realestateco.com</div>
<div class="a" style="left:979.5px;top:454.5px;width:5px;height:5px;border-radius:50%;border:1px solid #fff;opacity:.7"></div>
<div class="a" style="left:578px;top:767.5px;width:808px;height:512.5px;background:linear-gradient(135deg,#e38ee0 0%,#e579b0 30%,#e5687e 60%,#e4523e 100%)"></div>
<div class="a" style="left:578px;top:1280px;width:808px;height:58.2px;background:#fff;"></div>
<div class="a" style="left:858px;top:767.5px;width:3px;height:447.5px;background:#fff;"></div>
<div class="a" style="left:1100px;top:767.5px;width:3px;height:447.5px;background:#fff;"></div>
<div class="a" style="left:578px;top:1063px;width:808px;height:3px;background:#fff;"></div>
<div class="t" style="left:646px;top:1094.84px;font-size:12px;color:#fdf6f2;font-weight:bold;">TAILORED TO YOUR</div>
<div class="t" style="left:646px;top:1109.34px;font-size:12px;color:#fdf6f2;font-weight:bold;">LIFESTYLE</div>
<div class="t" style="left:896.3px;top:1094.84px;font-size:12px;color:#fdf6f2;font-weight:bold;">ELEGANT DESIGN AND</div>
<div class="t" style="left:896.3px;top:1109.34px;font-size:12px;color:#fdf6f2;font-weight:bold;">MODERN TECHNOLOGY</div>
<div class="t" style="left:1145px;top:1094.84px;font-size:12px;color:#fdf6f2;font-weight:bold;">COMFORT AT EVERY</div>
<div class="t" style="left:1145px;top:1109.34px;font-size:12px;color:#fdf6f2;font-weight:bold;">STEP</div>
<div class="t" style="left:646px;top:1135.09px;font-size:12.3px;color:#fdf6f2;letter-spacing:0.42px">Customizable layouts to suit</div>
<div class="t" style="left:646px;top:1149.19px;font-size:12.3px;color:#fdf6f2;letter-spacing:0.42px">your personal preferences.</div>
<div class="t" style="left:646px;top:1171.39px;font-size:12.3px;color:#fdf6f2;letter-spacing:0.42px">Flexible living spaces that</div>
<div class="t" style="left:646px;top:1185.59px;font-size:12.3px;color:#fdf6f2;letter-spacing:0.42px">adapt to your family’s needs.</div>
<div class="t" style="left:646px;top:1207.89px;font-size:12.3px;color:#fdf6f2;letter-spacing:0.42px">High-quality finishes and</div>
<div class="t" style="left:646px;top:1222.09px;font-size:12.3px;color:#fdf6f2;letter-spacing:0.42px">craftsmanship for a lasting</div>
<div class="t" style="left:646px;top:1236.39px;font-size:12.3px;color:#fdf6f2;letter-spacing:0.42px">impression.</div>
<div class="t" style="left:896.3px;top:1135.09px;font-size:12.3px;color:#fdf6f2;letter-spacing:0.42px">Use of innovative materials</div>
<div class="t" style="left:896.3px;top:1149.19px;font-size:12.3px;color:#fdf6f2;letter-spacing:0.42px">for durability and style.</div>
<div class="t" style="left:896.3px;top:1171.39px;font-size:12.3px;color:#fdf6f2;letter-spacing:0.42px">Integration of energy-</div>
<div class="t" style="left:896.3px;top:1185.59px;font-size:12.3px;color:#fdf6f2;letter-spacing:0.42px">efficient solutions to reduce</div>
<div class="t" style="left:896.3px;top:1199.89px;font-size:12.3px;color:#fdf6f2;letter-spacing:0.42px">costs.</div>
<div class="t" style="left:1145px;top:1135.09px;font-size:12.3px;color:#fdf6f2;letter-spacing:0.42px">Spacious rooms with</div>
<div class="t" style="left:1145px;top:1149.19px;font-size:12.3px;color:#fdf6f2;letter-spacing:0.42px">ergonomic solutions for your</div>
<div class="t" style="left:1145px;top:1163.39px;font-size:12.3px;color:#fdf6f2;letter-spacing:0.42px">everyday comfort.</div>
<div class="t" style="left:1145px;top:1185.59px;font-size:12.3px;color:#fdf6f2;letter-spacing:0.42px">Personalized areas for</div>
<div class="t" style="left:1145px;top:1199.89px;font-size:12.3px;color:#fdf6f2;letter-spacing:0.42px">relaxation and work</div>
<div class="t" style="left:1145px;top:1214.09px;font-size:12.3px;color:#fdf6f2;letter-spacing:0.42px">throughout the home.</div>
<div class="t" style="left:908px;top:1243.84px;font-size:12px;color:#fdf6f2;font-weight:bold;letter-spacing:0px">CALL US:+00 1234 567 89</div>
<div class="a" style="left:864.6px;top:1300.8px;width:19.6px;height:19.6px;background:#d9483e;border-radius:10px;"></div>
<div class="a" style="left:890.6px;top:1300.8px;width:19.6px;height:19.6px;background:#c8455a;border-radius:10px;"></div>
<div class="a" style="left:917px;top:1300.8px;width:19.6px;height:19.6px;background:#b24a78;border-radius:10px;"></div>
<div class="t" style="left:875px;top:1304.51px;font-size:14.5px;color:#fff;transform:translateX(-50%);font-weight:bold;">f</div>
<svg style="left:893.4px;top:1305px" width="14" height="11" viewBox="0 0 24 20"><path fill="#fff" d="M24 2.4c-.9.4-1.8.6-2.8.8 1-.6 1.8-1.6 2.2-2.7-1 .6-2 1-3.1 1.2C19.3.7 18 0 16.6 0c-2.7 0-4.9 2.2-4.9 4.9 0 .4 0 .8.1 1.1C7.7 5.8 4.1 3.9 1.7.9c-.4.7-.7 1.6-.7 2.5 0 1.7.9 3.2 2.2 4.1-.8 0-1.6-.2-2.2-.6v.1c0 2.4 1.7 4.4 3.9 4.8-.4.1-.8.2-1.3.2-.3 0-.6 0-.9-.1.6 2 2.4 3.4 4.6 3.4-1.7 1.3-3.8 2.1-6.1 2.1-.4 0-.8 0-1.2-.1 2.2 1.4 4.8 2.2 7.5 2.2 9.1 0 14-7.5 14-14v-.6c1-.7 1.8-1.6 2.5-2.5z"/></svg>
<svg style="left:920.8px;top:1304.6px" width="12" height="12" viewBox="0 0 12 12" fill="none" stroke="#fff" stroke-width="1.3"><rect x="0.8" y="0.8" width="10.4" height="10.4" rx="3"/><circle cx="6" cy="6" r="2.4"/><circle cx="9" cy="3" r="0.4" fill="#fff"/></svg>
<div class="t" style="left:947.5px;top:1300.41px;font-size:17px;color:transparent;letter-spacing:3px;background:linear-gradient(90deg,#a8506e,#8a5aa8 55%,#6a68c8);-webkit-background-clip:text;background-clip:text;-webkit-text-stroke:0.35px transparent">@realestateco</div>
<div class="a" style="left:979px;top:1050.5px;width:5px;height:5px;border-radius:50%;border:1px solid #fff;opacity:.7"></div>
<svg style="left:1029px;top:171px" width="357" height="521" viewBox="0 0 357 521" fill="none" stroke="none">
<defs>
 <pattern id="glass" width="26" height="15" patternUnits="userSpaceOnUse" patternTransform="rotate(-10) skewX(-30)">
   <rect width="26" height="15" fill="#4e5a62"/>
   <rect x="1.4" y="1.4" width="23.2" height="12.2" fill="#b4c4cc"/>
   <rect x="3" y="7.5" width="20" height="5" fill="#4f84b0"/>
 </pattern>
 <pattern id="glassV" width="18" height="11" patternUnits="userSpaceOnUse" patternTransform="rotate(-12) skewX(-28)">
   <rect width="18" height="11" fill="#4a3aa8"/>
   <rect x="1.2" y="1.2" width="15.6" height="8.6" fill="#a393e8"/>
   <rect x="2" y="5.5" width="14" height="4" fill="#6a58d8"/>
 </pattern>
 <pattern id="glassR" width="16" height="13" patternUnits="userSpaceOnUse" patternTransform="rotate(8) skewY(10)">
   <rect width="16" height="13" fill="#3a2a9a"/>
   <rect x="1" y="1" width="14" height="11" fill="#6f5ad8"/>
   <rect x="1" y="7" width="14" height="5" fill="#4d3cc0"/>
 </pattern>
 <pattern id="tile" width="34" height="34" patternUnits="userSpaceOnUse" patternTransform="skewX(-14)">
   <rect width="34" height="34" fill="#d9cfbf"/>
   <path d="M0 0.5 H34 M0.5 0 V34" stroke="#b9ad9a" stroke-width="0.8"/>
 </pattern>
 <linearGradient id="lil" x1="0" y1="0" x2="0" y2="1">
   <stop offset="0" stop-color="#c6b4f4"/><stop offset="0.55" stop-color="#e4b2ee"/><stop offset="1" stop-color="#f4a8c4"/>
 </linearGradient>
 <linearGradient id="mauve" x1="0" y1="0" x2="1" y2="0.3">
   <stop offset="0" stop-color="#b47598"/><stop offset="1" stop-color="#b0627c"/>
 </linearGradient>
</defs>
<!-- sky -->
<rect width="357" height="521" fill="#6ea6d0"/>
<!-- glass left face -->
<path d="M0 118 L29 106 L295 59 L300 70 L230 318 L0 318 Z" fill="url(#glass)"/>
<!-- lighter lower glass -->
<path d="M0 225 L240 205 L226 318 L0 318 Z" fill="#a8bcc6" opacity=".45"/>
<!-- tan band -->
<path d="M0 159 L250 176 L250 190 L0 198 Z" fill="#c9ae86"/>
<path d="M0 198 L250 190 L250 212 L0 228 Z" fill="#3e4a50" opacity=".7"/>
<path d="M115 299 L240 296 L236 329 L115 329 Z" fill="#c6b79a"/>
<!-- lower facade tiles -->
<path d="M0 318 L357 310 L357 510 L0 510 Z" fill="url(#tile)"/>
<!-- brown strip -->
<rect y="510" width="357" height="11" fill="#6e4e32"/>
<rect y="510" width="115" height="11" fill="#7a3446"/>
<!-- top-right overlay column C -->
<rect x="195" y="0" width="162" height="70" fill="url(#mauve)"/>
<path d="M195 60 L295 50 L357 85 L357 262 L195 262 Z" fill="url(#glassV)"/>
<path d="M262 90 L357 92 L357 262 L225 262 Z" fill="url(#glassR)"/>
<path d="M195 70 L300 58 L240 262 L195 262 Z" fill="#a08ae0" opacity=".35"/>
<!-- column B glass tint lower -->
<path d="M205 176 Q240 210 257 262 L195 262 L195 176 Z" fill="#5c48d0" opacity=".55"/>
<!-- column A violet region -->
<path d="M0 233 Q70 250 114 330 L0 330 Z" fill="#7f7af0" opacity=".85"/>
<!-- column A lilac -->
<rect x="0" y="330" width="115" height="180" fill="url(#lil)"/>
<path d="M0 370 L108 370 L76 445 L0 445 Z" fill="#5d2f86"/>
<path d="M0 398 L96 398 L90 412 L0 412 Z" fill="#4a2270"/>
<path d="M0 330 L115 330 L115 370 L0 370 Z" fill="#c7b6f2" opacity=".8"/>
<!-- column B sky part -->
<path d="M115 0 H195 V62 L115 76 Z" fill="#6aa3cf"/>
<!-- windows in lower facade -->
<rect x="183" y="400" width="52" height="45" fill="#2d4860" stroke="#cfc6b6" stroke-width="2"/>
<rect x="269" y="394" width="48" height="51" fill="#2f4656" stroke="#cfc6b6" stroke-width="2"/>
<rect x="348" y="372" width="12" height="73" fill="#36505e"/>
<!-- purple quarter circle -->
<path d="M0 0 A115 115 0 0 0 115 115 L115 0 Z" fill="#6a62ea"/>
<!-- white shape -->
<path d="M196 262 H357 V340 A178 178 0 0 1 196 440 Z" fill="#fff"/>
<!-- white outlines -->
<path d="M1 117 H115 A114 114 0 0 1 1 231" stroke="#fff" stroke-width="2.2"/>
<path d="M115 521 A81 81 0 0 1 196 440" stroke="#fff" stroke-width="2.2"/>
<!-- small window outlines -->
<path d="M42 124 L75 119 L68 140 L35 145 Z" stroke="#fff" stroke-width="1.2"/>
<path d="M215 110 L245 106 L240 128 L210 132 Z" stroke="#e8d8ff" stroke-width="1.2"/>
<path d="M240 75 L270 71 L266 92 L236 96 Z" stroke="#e8d8ff" stroke-width="1.2"/>
</svg>
<svg style="left:640.9px;top:847.5px" width="195" height="195" viewBox="-97.5 -97.5 195 195" fill="none" stroke="none">
<defs><clipPath id="c1"><circle r="94"/></clipPath></defs>
<g clip-path="url(#c1)">
<rect x="-100" y="-100" width="200" height="200" fill="#e6e9eb"/>
<path d="M-100 -45 C-90 -60 -80 -78 -62 -76 C-50 -70 -48 -55 -52 -45 L-60 -36 L-100 -30 Z" fill="#9c8050"/>
<path d="M-85 -50 C-75 -62 -62 -62 -55 -52 L-60 -40 L-88 -38 Z" fill="#7a6a3a"/>
<path d="M-12 -30 C-8 -40 10 -40 22 -32 L20 -24 L-10 -24 Z" fill="#8c7038"/>
<path d="M82 -30 C90 -38 96 -20 96 0 L84 2 Z" fill="#8a8a70"/>
<!-- left gable -->
<path d="M-100 -5 L-86 -37 L-70 -3 Z" fill="#b9bdc1"/>
<!-- dark roof left -->
<path d="M-86 -37 L-47 -34 L-25 -43 L-66 -3 L-72 -3 Z" fill="#4d555d"/>
<!-- main gable -->
<path d="M-70 -1 L-25 -43 L12 -1 Z" fill="#c3c7cb"/>
<path d="M-25 -43 L-60 -8 L-50 -8 L-25 -35 Z" fill="#d8d2cc"/>
<rect x="-38" y="-21" width="4" height="18" fill="#2e343a"/><rect x="-18" y="-21" width="4" height="18" fill="#2e343a"/>
<rect x="-33" y="-21" width="14" height="16" fill="#f0f0f0"/><rect x="-31" y="-19" width="4" height="12" fill="#5a6068"/><rect x="-24" y="-19" width="4" height="12" fill="#5a6068"/>
<!-- middle dark roof -->
<path d="M-12 -29 L25 -27 L26 1 L5 1 Z" fill="#48515a"/>
<path d="M-4 -12 A10 10 0 0 1 15 -12 Z" fill="#f2f2f2"/>
<path d="M-1 -12 A7 7 0 0 1 12 -12 Z" fill="#8a9096"/>
<!-- right gable -->
<path d="M22 3 L51 -32 L80 4 Z" fill="#c5c8cb"/>
<path d="M25 -12 L38 -28 L51 -32 L30 -2 Z" fill="#dcdcd8"/>
<rect x="42" y="-14" width="3.5" height="15" fill="#2e343a"/><rect x="57" y="-14" width="3.5" height="15" fill="#2e343a"/>
<rect x="45.5" y="-13" width="11.5" height="13" fill="#5a6068"/>
<!-- porch roof -->
<path d="M-93 2 L80 2 L92 8 L-93 8 Z" fill="#f4f4f4"/>
<rect x="-93" y="8" width="190" height="18" fill="#b4b8bc"/>
<rect x="-48" y="11" width="30" height="13" fill="#7a8086"/>
<rect x="20" y="11" width="45" height="13" fill="#6a7076"/>
<g fill="#f6f6f6"><rect x="-70" y="7" width="4" height="46"/><rect x="-55" y="7" width="4" height="46"/><rect x="-36" y="7" width="4" height="46"/><rect x="-9" y="7" width="4" height="46"/><rect x="11" y="7" width="4" height="46"/><rect x="33" y="7" width="4" height="46"/><rect x="70" y="7" width="4" height="46"/></g>
<rect x="-93" y="25" width="190" height="12" fill="#e8eaec"/>
<path d="M-60 28 V36 M-50 28 V36 M-40 28 V36 M-25 28 V36 M-15 28 V36 M0 28 V36 M20 28 V36 M30 28 V36 M45 28 V36 M55 28 V36 M80 28 V36" stroke="#9aa0a4" stroke-width="1.5"/>
<rect x="-93" y="37" width="190" height="16" fill="#dedfe0"/>
<path d="M-60 40 L-40 50 M-60 50 L-40 40 M-30 40 L-10 50 M-30 50 L-10 40" stroke="#a0a4a8" stroke-width="1"/>
<path d="M-100 15 C-88 8 -75 14 -66 22 L-64 53 L-100 53 Z" fill="#a88478"/>
<path d="M-25 53 C-20 40 -10 40 -5 53 Z M5 53 C10 42 22 42 28 53 Z M40 53 C48 40 62 42 70 53 Z" fill="#56683e"/>
<!-- lawn -->
<rect x="-100" y="52" width="200" height="55" fill="#86b444"/>
<path d="M-100 52 H100 V60 C50 57 0 60 -100 58 Z" fill="#3f5a2a"/>
<rect x="-100" y="70" width="200" height="30" fill="#8ebd48" opacity=".6"/>
</g>
<circle r="95.3" stroke="#fdfafa" stroke-width="4.2"/>
</svg>
<svg style="left:882.8px;top:847.5px" width="195" height="195" viewBox="-97.5 -97.5 195 195" fill="none" stroke="none">
<defs><clipPath id="c2"><circle r="94"/></clipPath></defs>
<g clip-path="url(#c2)">
<rect x="-100" y="-100" width="200" height="200" fill="#d3d5d8"/>
<!-- dark overhang -->
<path d="M-100 -100 H100 V100 L86 22 L75 -10 L8 -68 L-1 -68 L-26 -53 L-53 -76 L-100 -70 Z" fill="#171515"/>
<path d="M-60 -78 L-2 -96 L40 -80 L10 -68 L-1 -68 L-26 -53 Z" fill="#3a2622"/>
<!-- glass building -->
<path d="M-100 -60 L-53 -76 L-26 -53 L-26 8 L-100 8 Z" fill="#5d8188"/>
<path d="M-90 -60 V8 M-80 -63 V8 M-70 -67 V8 M-60 -70 V8 M-50 -72 V8 M-40 -62 V8 M-100 -45 H-26 M-100 -30 H-26 M-100 -15 H-26 M-100 -2 H-26" stroke="#2f444a" stroke-width="1.3"/>
<path d="M-95 -30 L-40 -40 L-40 -10 L-95 -5 Z" fill="#9ab0b4" opacity=".35"/>
<!-- concrete pillar -->
<path d="M-28 -53 L-1 -68 L-8 -20 L-18 8 L-28 8 Z" fill="#8d6e60"/>
<path d="M-24 -35 C-15 -40 -8 -30 -12 -15 L-22 -12 Z" fill="#4e3a30"/>
<!-- buildings -->
<path d="M-18 -42 L5 -42 L25 -32 L25 10 L-18 10 Z" fill="#9b5b4c"/>
<path d="M-8 -30 V5 M0 -30 V5 M8 -30 V5 M16 -28 V5" stroke="#e6d6cc" stroke-width="2.2"/>
<rect x="25" y="-28" width="28" height="36" fill="#e2e3e5"/>
<rect x="30" y="-20" width="8" height="20" fill="#9aa4ac"/>
<path d="M51 -15 L62 -22 L78 -12 L78 10 L51 10 Z" fill="#a96252"/>
<!-- lower left -->
<rect x="-100" y="0" width="45" height="50" fill="#2a2624"/>
<rect x="-100" y="-2" width="75" height="7" fill="#4a4644"/>
<path d="M-67 6 L-4 10 L-2 47 L-67 47 Z" fill="#8a4a3b"/>
<!-- steps -->
<path d="M-25 47 L-5 20 L60 18 L88 20 L92 50 Z" fill="#8c8884"/>
<path d="M-20 40 H20 M-15 33 H25 M-8 26 H30 M35 42 H75 M38 35 H78 M40 28 H80" stroke="#7a3a30" stroke-width="3.5"/>
<rect x="-100" y="47" width="200" height="55" fill="#8a8785"/>
<rect x="-100" y="47" width="200" height="6" fill="#6e6a68"/>
<rect x="2.5" y="12" width="2.5" height="43" fill="#1e1e1e"/>
<rect x="-3" y="12" width="14" height="6" fill="#e8e8e8"/>
<path d="M17 38 h7 v17 h-7 Z" fill="#2a2828"/>
</g>
<circle r="95.3" stroke="#fdfafa" stroke-width="4.2"/>
</svg>
<svg style="left:1125.2px;top:847.5px" width="195" height="195" viewBox="-97.5 -97.5 195 195" fill="none" stroke="none">
<defs><clipPath id="c3"><circle r="94"/></clipPath></defs>
<g clip-path="url(#c3)">
<rect x="-100" y="-100" width="200" height="200" fill="#d9dee5"/>
<!-- top foliage -->
<path d="M-100 -100 H100 V-62 C88 -60 76 -52 62 -56 C50 -48 38 -56 26 -54 C14 -60 2 -52 -10 -58 C-24 -54 -38 -62 -52 -58 C-64 -70 -80 -66 -100 -74 Z" fill="#5d6a52"/>
<path d="M40 -60 C55 -62 70 -50 82 -40 C92 -30 96 -15 100 -5 L100 -62 Z" fill="#66725a"/>
<path d="M-20 -70 C-5 -78 15 -76 30 -68 C20 -60 0 -62 -20 -62 Z" fill="#4f5c46"/>
<!-- white building -->
<path d="M-43 -12 L20 -57 L47 -57 L47 1 L-43 8 Z" fill="#ebebea"/>
<path d="M-43 -5 L40 -40 L40 -28 L-43 5 Z" fill="#f4f4f2"/>
<path d="M-24 -21 L6 -33 L2 -25 L-22 -17 Z" fill="#e2441e"/>
<rect x="-38" y="-10" width="10" height="10" fill="#9aa6a8"/>
<!-- stone block -->
<path d="M20 -28 L50 -36 L73 -40 L73 -10 L22 -8 Z" fill="#857a5c"/>
<!-- trunks -->
<path d="M-36 -57 C-30 -30 -38 -10 -32 12 L-20 12 C-24 -10 -16 -35 -22 -60 Z" fill="#5a5246"/>
<path d="M-30 -55 C-20 -72 -5 -80 10 -88 M-34 -50 C-45 -60 -50 -70 -48 -85 M12 -20 C15 -40 10 -60 14 -80" stroke="#5a5246" stroke-width="3"/>
<path d="M-68 -60 C-65 -40 -64 -20 -66 0 M-58 -62 C-56 -45 -55 -30 -56 -15" stroke="#4e4a40" stroke-width="2.2"/>
<!-- left tree -->
<path d="M-100 -10 C-95 -35 -75 -42 -60 -35 C-45 -25 -40 -5 -44 10 L-100 12 Z" fill="#7c924f"/>
<!-- right bushes -->
<path d="M15 -15 C30 -25 55 -22 70 -15 C85 -10 95 0 100 5 L100 30 L15 30 Z" fill="#5b6948"/>
<path d="M70 -40 C85 -35 95 -20 100 -10 V10 L75 5 Z" fill="#666e52"/>
<path d="M-100 -5 C-80 -10 -55 -5 -36 0 L-36 14 L-100 14 Z" fill="#3d4c3a"/>
<!-- fence -->
<rect x="-100" y="12" width="137" height="23" fill="#5c6770"/>
<path d="M-88 12 V35 M-78 12 V35 M-69 12 V35 M-60 12 V35 M-50 12 V35 M-41 12 V35 M-32 12 V35 M-23 12 V35 M-14 12 V35 M-5 12 V35 M4 12 V35 M13 12 V35 M22 12 V35 M31 12 V35" stroke="#262c32" stroke-width="1.4"/>
<!-- stone wall -->
<rect x="-100" y="33" width="200" height="70" fill="#d5c8aa"/>
<path d="M-85 45 C-70 40 -55 48 -40 44 C-25 40 -10 48 5 44 M-90 60 C-72 55 -55 63 -35 58 C-15 54 0 62 20 58 M-80 75 C-60 70 -40 78 -20 73 C0 68 20 76 35 72 M-70 88 C-50 84 -30 90 -10 86" stroke="#b4a586" stroke-width="1.6"/>
<rect x="36" y="17" width="25" height="50" fill="#dddad2"/>
<rect x="36" y="67" width="25" height="40" fill="#d3cdbc"/>
<rect x="61" y="25" width="6" height="37" fill="#8e8470"/>
<rect x="67" y="24" width="40" height="80" fill="#cdbfa2"/>
</g>
<circle r="95.3" stroke="#fdfafa" stroke-width="4.2"/>
</svg>
<div class="a" style="left:578px;top:171px;width:808px;height:1167.2px;border:1.2px solid #0d99ff"></div>
<div class="a" style="left:574px;top:167px;width:8px;height:8px;background:#fff;border:1px solid #0d99ff"></div>
<div class="a" style="left:1382px;top:167px;width:8px;height:8px;background:#fff;border:1px solid #0d99ff"></div>
<div class="a" style="left:574px;top:1334.2px;width:8px;height:8px;background:#fff;border:1px solid #0d99ff"></div>
<div class="a" style="left:1382px;top:1334.2px;width:8px;height:8px;background:#fff;border:1px solid #0d99ff"></div>
<div class="t" style="left:579px;top:152.3px;font-size:11px;color:#8fbfe3;">1-Side</div>
<div class="a" style="left:578px;top:741.2px;width:808px;height:26.3px;background:#1e1e1e;"></div>
<div class="a" style="left:578px;top:741.2px;width:808px;height:1px;background:#0d99ff;"></div>
<div class="a" style="left:578px;top:766.5px;width:808px;height:1px;background:#0d99ff;"></div>
<div class="a" style="left:578px;top:741px;width:1.2px;height:26.5px;background:#0d99ff;"></div>
<div class="a" style="left:1384.8px;top:741px;width:1.2px;height:26.5px;background:#0d99ff;"></div>
<div class="t" style="left:579px;top:749.3px;font-size:11px;color:#8fbfe3;">2-Side</div>
<div class="a" style="left:950px;top:1345.6px;width:64px;height:17.3px;background:#0d8ae8;border-radius:3px;"></div>
<div class="t" style="left:982px;top:1349px;font-size:11px;color:#fff;transform:translateX(-50%);font-weight:bold;">842 × 1218</div>
<div class="a" style="left:1126px;top:1340.5px;width:421px;height:47.5px;background:#2c2c2c;border-radius:13px;border:1px solid #3a3a3a;box-shadow:0 2px 6px rgba(0,0,0,.35)"></div>
<div class="a" style="left:1134px;top:1348px;width:32px;height:32px;background:#0d8ae8;border-radius:7px;"></div>
<svg style="left:1141px;top:1355px;" width="18" height="18" viewBox="0 0 18 18" fill="none" stroke="#fff" stroke-width="1.3" stroke-linecap="round" stroke-linejoin="round"><path d="M2 2 L16 7.5 L9.5 9.5 L7.5 16 Z"/></svg>
<svg style="left:1171.6px;top:1362.5px;" width="6" height="3.5" viewBox="0 0 6 3.5" fill="none" stroke="#e6e6e6" stroke-width="1.1" stroke-linecap="round" stroke-linejoin="round"><path d="M0.5 0.5 L3 3 L5.5 0.5"/></svg>
<svg style="left:1228.4px;top:1362.5px;" width="6" height="3.5" viewBox="0 0 6 3.5" fill="none" stroke="#e6e6e6" stroke-width="1.1" stroke-linecap="round" stroke-linejoin="round"><path d="M0.5 0.5 L3 3 L5.5 0.5"/></svg>
<svg style="left:1285.2px;top:1362.5px;" width="6" height="3.5" viewBox="0 0 6 3.5" fill="none" stroke="#e6e6e6" stroke-width="1.1" stroke-linecap="round" stroke-linejoin="round"><path d="M0.5 0.5 L3 3 L5.5 0.5"/></svg>
<svg style="left:1342.5px;top:1362.5px;" width="6" height="3.5" viewBox="0 0 6 3.5" fill="none" stroke="#e6e6e6" stroke-width="1.1" stroke-linecap="round" stroke-linejoin="round"><path d="M0.5 0.5 L3 3 L5.5 0.5"/></svg>
<svg style="left:1199px;top:1356px;" width="16" height="16" viewBox="0 0 16 16" fill="none" stroke="#fff" stroke-width="1.3" stroke-linecap="round" stroke-linejoin="round"><path d="M4.5 0 V16 M11.5 0 V16 M0 4.5 H16 M0 11.5 H16"/></svg>
<svg style="left:1254.5px;top:1355px;" width="18" height="18" viewBox="0 0 18 18" fill="none" stroke="#fff" stroke-width="1.2" stroke-linecap="round" stroke-linejoin="round"><circle cx="9" cy="9" r="8.3"/></svg>
<svg style="left:1313px;top:1356px;" width="17" height="17" viewBox="0 0 17 17" fill="none" stroke="#fff" stroke-width="1.1" stroke-linecap="round" stroke-linejoin="round"><path d="M1 1 L9.5 3.3 Q12.8 6.3 13.8 10.8 L11.3 13.3 Q6.5 12.3 3.4 9.4 Q1.4 6 1 1 Z M11.3 13.3 L13.3 15.6 L16 12.9 L13.8 10.8 M1 1 L5.9 6"/><circle cx="6.8" cy="7" r="1.4"/></svg>
<svg style="left:1369.5px;top:1355.5px;" width="16" height="16" viewBox="0 0 16 16" fill="none" stroke="#fff" stroke-width="1.2" stroke-linecap="round" stroke-linejoin="round"><path d="M1 4 V1 H15 V4 M8 1 V15 M4.5 15 H11.5"/></svg>
<svg style="left:1409.5px;top:1356px;" width="17" height="17" viewBox="0 0 17 17" fill="none" stroke="#fff" stroke-width="1.2" stroke-linecap="round" stroke-linejoin="round"><path d="M8.5 1 A7.5 7.5 0 1 1 8.5 16 H1 V8.5 A7.5 7.5 0 0 1 8.5 1 Z"/></svg>
<svg style="left:1448.5px;top:1355.5px;" width="20" height="20" viewBox="0 0 20 20" fill="none" stroke="#fff" stroke-width="1.1" stroke-linecap="round" stroke-linejoin="round"><path d="M7.7 0.8 C8.3 5.5 9.9 7.1 14.6 7.7 C9.9 8.3 8.3 9.9 7.7 14.6 C7.1 9.9 5.5 8.3 0.8 7.7 C5.5 7.1 7.1 5.5 7.7 0.8 Z"/><circle cx="15.5" cy="2" r="2"/><path d="M15.2 12.5 V17.5 M12.7 15 H17.7"/></svg>
<div class="a" style="left:1482px;top:1341px;width:1px;height:46.5px;background:#3e3e3e;"></div>
<div class="a" style="left:1496px;top:1347px;width:38.5px;height:29px;background:#333;border-radius:6px;"></div>
<svg style="left:1499px;top:1358px;" width="16" height="11" viewBox="0 0 16 11" fill="none" stroke="#e6e6e6" stroke-width="1.1" stroke-linecap="round" stroke-linejoin="round"><path d="M4.5 1 L1 5.5 L4.5 10 M11.5 1 L15 5.5 L11.5 10 M9.5 0.5 L6.5 10.5"/></svg>
<div class="a" style="left:1429px;top:444px;width:500px;height:590px;background:#fff;border-radius:10px;box-shadow:0 0 0 1px rgba(255,255,255,.16),0 6px 22px rgba(0,0,0,.55)"></div>
<div class="a" style="left:1429px;top:444px;width:500px;height:39.6px;background:#2c2c2c;border-radius:10px 10px 0 0"></div>
<svg style="left:1443px;top:457.5px;" width="13" height="13" viewBox="0 0 13 13" fill="none" stroke="#fff" stroke-width="1.5" stroke-linecap="round" stroke-linejoin="round"><path d="M12 1.2 C6 0.8 1.2 4 1.2 8 C1.2 10.6 2.8 12 5 12 M10.8 3.6 C7.2 3.4 4.2 5.6 4.2 8.4 C4.2 9.8 5 10.8 6.2 10.8 M9.6 5.9 C8 5.9 6.8 7.1 6.8 8.5 C6.8 9.3 7.2 9.8 7.8 9.9"/></svg>
<div class="t" style="left:1464.8px;top:459px;font-size:11px;color:#fff;font-weight:bold;">Crowdin for Figma</div>
<svg style="left:1903px;top:459px;" width="11" height="11" viewBox="0 0 11 11" fill="none" stroke="#fff" stroke-width="1.3" stroke-linecap="round" stroke-linejoin="round"><path d="M0.5 0.5 L10.5 10.5 M10.5 0.5 L0.5 10.5"/></svg>
<div class="t" style="left:1444.2px;top:497.45px;font-size:14px;color:#222;">Pages</div>
<div class="t" style="right:758.5px;top:496.77px;font-size:14.8px;color:#b8b8b8;">Settings</div>
<div class="a" style="left:1429px;top:523px;width:500px;height:1px;background:#e6e6e6;"></div>
<div class="t" style="left:1445.2px;top:541.8px;font-size:11.7px;color:#1e1e1e;">Translate marketing visuals, like social media banners, brochures, and more. Send ready</div>
<div class="t" style="left:1445.2px;top:557.9px;font-size:11.7px;color:#1e1e1e;">pages for translation to Crowdin and upload translated copies back to Figma for further</div>
<div class="t" style="left:1445.2px;top:573.7px;font-size:11.7px;color:#1e1e1e;">customizations.</div>
<div class="a" style="left:1429px;top:604.3px;width:500px;height:1px;background:#e6e6e6;"></div>
<div class="t" style="left:1445px;top:623.9px;font-size:11px;color:#111;font-weight:bold;">Figma</div>
<svg style="left:1481.2px;top:624.7px;" width="9" height="9" viewBox="0 0 9 9" fill="none" stroke="#111" stroke-width="1.4" stroke-linecap="round" stroke-linejoin="round"><path d="M0.8 4.5 H8 M4.5 1 L8 4.5 L4.5 8"/></svg>
<div class="t" style="left:1494.3px;top:623.9px;font-size:11px;color:#111;font-weight:bold;">Crowdin</div>
<div class="a" style="left:1546.2px;top:623.2px;width:12px;height:12px;border-radius:6px;border:1px solid #555"></div>
<div class="t" style="left:1552.2px;top:625.06px;font-size:9px;color:#444;transform:translateX(-50%);">?</div>
<div class="a" style="left:1445.2px;top:645.3px;width:90.5px;height:31.3px;background:#fff;border-radius:6px;border:1px solid #3a3a3a"></div>
<div class="t" style="left:1490.5px;top:655.56px;font-size:11.5px;color:#333;transform:translateX(-50%);">All Frames</div>
<div class="a" style="left:1546.2px;top:645.3px;width:123.5px;height:31.3px;background:#fff;border-radius:6px;border:1px solid #3a3a3a"></div>
<div class="t" style="left:1608px;top:655.56px;font-size:11.5px;color:#333;transform:translateX(-50%);">Selected Frames</div>
<div class="a" style="left:1429px;top:693px;width:500px;height:1px;background:#e6e6e6;"></div>
<div class="t" style="left:1445.3px;top:712.6px;font-size:11px;color:#111;font-weight:bold;">Crowdin</div>
<svg style="left:1493.5px;top:713.4px;" width="9" height="9" viewBox="0 0 9 9" fill="none" stroke="#111" stroke-width="1.4" stroke-linecap="round" stroke-linejoin="round"><path d="M0.8 4.5 H8 M4.5 1 L8 4.5 L4.5 8"/></svg>
<div class="t" style="left:1506px;top:712.6px;font-size:11px;color:#111;font-weight:bold;">Figma</div>
<div class="a" style="left:1545.7px;top:711.9px;width:12px;height:12px;border-radius:6px;border:1px solid #555"></div>
<div class="t" style="left:1551.7px;top:713.76px;font-size:9px;color:#444;transform:translateX(-50%);">?</div>
<div class="t" style="left:1446px;top:743.96px;font-size:11.5px;color:#6a6a6a;">All languages</div>
<svg style="left:1522.5px;top:747.5px;" width="7" height="4" viewBox="0 0 7 4" fill="none" stroke="#aaa" stroke-width="1" stroke-linecap="round" stroke-linejoin="round"><path d="M0.5 0.5 L3.5 3.5 L6.5 0.5"/></svg>
<div class="a" style="left:1445.2px;top:774.3px;width:90.5px;height:31.3px;background:#fff;border-radius:6px;border:1px solid #3a3a3a"></div>
<div class="t" style="left:1490.5px;top:784.56px;font-size:11.5px;color:#333;transform:translateX(-50%);">All Frames</div>
<div class="a" style="left:1546.2px;top:774.3px;width:123.5px;height:31.3px;background:#fff;border-radius:6px;border:1px solid #3a3a3a"></div>
<div class="t" style="left:1608px;top:784.56px;font-size:11.5px;color:#333;transform:translateX(-50%);">Selected Frames</div>
<div class="a" style="left:1429px;top:822px;width:500px;height:1px;background:#e6e6e6;"></div>
<div class="t" style="left:1445.3px;top:841.7px;font-size:11px;color:#111;font-weight:bold;">Pseudo-localization</div>
<div class="a" style="left:1558.9px;top:841px;width:12px;height:12px;border-radius:6px;border:1px solid #555"></div>
<div class="t" style="left:1564.9px;top:842.86px;font-size:9px;color:#444;transform:translateX(-50%);">?</div>
<div class="a" style="left:1445.2px;top:863.5px;width:90.5px;height:31.3px;background:#fff;border-radius:6px;border:1px solid #3a3a3a"></div>
<div class="t" style="left:1490.5px;top:873.76px;font-size:11.5px;color:#333;transform:translateX(-50%);">All Frames</div>
<div class="a" style="left:1546.2px;top:863.5px;width:123.5px;height:31.3px;background:#fff;border-radius:6px;border:1px solid #3a3a3a"></div>
<div class="t" style="left:1608px;top:873.76px;font-size:11.5px;color:#333;transform:translateX(-50%);">Selected Frames</div>
<div class="a" style="left:1429px;top:994.2px;width:500px;height:1px;background:#e6e6e6;"></div>
<div class="a" style="left:1629.7px;top:1005.3px;width:20.3px;height:19.6px;background:#2a2a2a;border-radius:5px;"></div>
<svg style="left:1633.5px;top:1009px;" width="13" height="13" viewBox="0 0 13 13" fill="none" stroke="#fff" stroke-width="1.4" stroke-linecap="round" stroke-linejoin="round"><path d="M12 1.2 C6 0.8 1.2 4 1.2 8 C1.2 10.6 2.8 12 5 12 M10.8 3.6 C7.2 3.4 4.2 5.6 4.2 8.4 C4.2 9.8 5 10.8 6.2 10.8 M9.6 5.9 C8 5.9 6.8 7.1 6.8 8.5 C6.8 9.3 7.2 9.8 7.8 9.9"/></svg>
<div class="t" style="left:1654.5px;top:1002.72px;font-size:21px;color:#2a2a2a;-webkit-text-stroke:0.5px #2a2a2a;letter-spacing:0.35px">crowdin</div></div>
<div class="a" style="left:56px;top:38px;width:2560px;height:1362px;border-radius:10px;border:1px solid rgba(255,255,255,0.22);pointer-events:none"></div>
</body></html>
